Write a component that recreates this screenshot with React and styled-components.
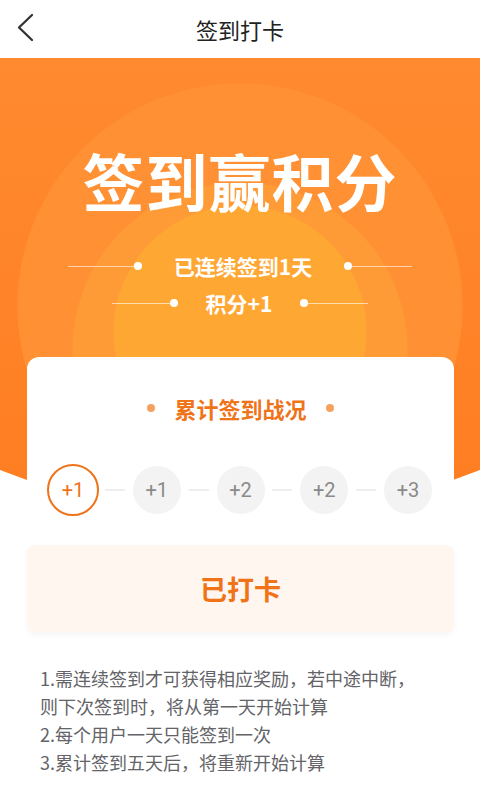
import React from "react";
import styled, { createGlobalStyle } from "styled-components";

const Global = createGlobalStyle`
  html, body { margin: 0; padding: 0; background: #fff; }
  body { font-family: "Noto Sans CJK SC", "Noto Sans", sans-serif; }
  * { box-sizing: border-box; }
`;

const Page = styled.div`
  width: 480px;
  min-height: 800px;
  background: #fff;
  overflow: hidden;
`;

const Header = styled.header`
  height: 58px;
  display: grid;
  grid-template-columns: 60px 1fr 60px;
  align-items: center;
  background: #fff;
`;

const BackBtn = styled.button`
  width: 50px;
  height: 58px;
  border: 0;
  background: transparent;
  padding: 0;
  display: flex;
  align-items: center;
  justify-content: flex-start;
`;

const Title = styled.h1`
  margin: 0;
  text-align: center;
  font-size: 22px;
  font-weight: 400;
  color: #222;
  line-height: 58px;
`;

const Banner = styled.section`
  height: 501px;
  padding-top: 91px;
  background:
    radial-gradient(circle at 240px 274px, #ffa733 0 126px, transparent 127px),
    radial-gradient(circle at 240px 292px, #ff9b36 0 167px, transparent 168px),
    radial-gradient(circle at 240px 248px, #ff9034 0 222px, transparent 223px),
    linear-gradient(180deg, #ff8a30 0%, #ff7c20 100%);
  clip-path: polygon(0 0, 100% 0, 100% 412px, 50% 100%, 0 412px);
  color: #fff;
  text-align: center;
`;

const BigTitle = styled.h2`
  margin: 0;
  font-size: 62px;
  line-height: 62px;
  font-weight: 700;
  letter-spacing: 1px;
`;

const InfoRow = styled.div`
  display: flex;
  align-items: center;
  justify-content: center;
  gap: ${(p) => p.$gap}px;
  margin-top: ${(p) => p.$top}px;
  height: 30px;
`;

const InfoText = styled.span`
  font-size: 21px;
  font-weight: 700;
  line-height: 30px;
`;

const Deco = styled.span`
  display: flex;
  align-items: center;
  flex-direction: ${(p) => (p.$right ? "row-reverse" : "row")};
`;

const DecoLine = styled.i`
  display: block;
  width: ${(p) => p.$len}px;
  height: 1px;
  background: rgba(255, 255, 255, 0.6);
`;

const DecoDot = styled.i`
  display: block;
  width: 8px;
  height: 8px;
  border-radius: 50%;
  background: #fff;
`;

const Card = styled.section`
  position: relative;
  z-index: 1;
  margin: -202px 26px 0 27px;
  background: #fff;
  border-radius: 12px 12px 10px 10px;
  padding-top: 36px;
`;

const CardTitle = styled.h3`
  margin: 0;
  display: flex;
  align-items: center;
  justify-content: center;
  gap: 19px;
  font-size: 22px;
  line-height: 30px;
  font-weight: 700;
  color: #ef7419;
`;

const TitleDot = styled.i`
  width: 8px;
  height: 8px;
  border-radius: 50%;
  background: #f5a05c;
`;

const Steps = styled.ol`
  list-style: none;
  margin: 41px 0 0;
  padding: 0 20px;
  display: flex;
  align-items: center;
  justify-content: space-between;
`;

const Step = styled.li`
  width: 52px;
  height: 52px;
  display: flex;
  align-items: center;
  justify-content: center;
`;

const Bubble = styled.span`
  width: ${(p) => (p.$active ? 52 : 48)}px;
  height: ${(p) => (p.$active ? 52 : 48)}px;
  border-radius: 50%;
  display: flex;
  align-items: center;
  justify-content: center;
  font-family: "Roboto", "Noto Sans", sans-serif;
  font-size: 20px;
  color: ${(p) => (p.$active ? "#ee7319" : "#8a8a8a")};
  background: ${(p) => (p.$active ? "#fff" : "#f3f3f3")};
  border: ${(p) => (p.$active ? "2.5px solid #ee7319" : "0")};
`;

const Dash = styled.li`
  width: 20px;
  height: 2px;
  background: #eeeeee;
`;

const DoneButton = styled.button`
  margin-top: 29px;
  width: 100%;
  height: 87px;
  border: 0;
  border-radius: 8px;
  background: #fff7ef;
  box-shadow: 0 3px 6px rgba(0, 0, 0, 0.04);
  font-family: "Noto Sans CJK SC", sans-serif;
  font-size: 27px;
  font-weight: 700;
  color: #f07318;
`;

const Rules = styled.ol`
  list-style: none;
  margin: 32px 0 0;
  padding: 0 56px 0 40px;
  font-size: 18px;
  line-height: 28px;
  color: #636368;
`;

const Rule = styled.li``;

const steps = [
  { label: "+1", active: true },
  { label: "+1" },
  { label: "+2" },
  { label: "+2" },
  { label: "+3" },
];

function Decor({ right, len }) {
  return (
    <Deco $right={right}>
      <DecoLine $len={len} />
      <DecoDot />
    </Deco>
  );
}

export default function App() {
  return (
    <Page>
      <Global />
      <Header>
        <BackBtn aria-label="返回">
          <svg width="40" height="58" viewBox="0 0 40 58">
            <polyline
              points="32,15 19,27.5 32,40"
              fill="none"
              stroke="#333"
              strokeWidth="2.3"
              strokeLinecap="round"
              strokeLinejoin="round"
            />
          </svg>
        </BackBtn>
        <Title>签到打卡</Title>
        <span />
      </Header>

      <Banner>
        <BigTitle>签到赢积分</BigTitle>
        <InfoRow $gap={32} $top={40}>
          <Decor len={66} />
          <InfoText>已连续签到1天</InfoText>
          <Decor right len={60} />
        </InfoRow>
        <InfoRow $gap={28} $top={7}>
          <Decor len={58} />
          <InfoText>积分+1</InfoText>
          <Decor right len={60} />
        </InfoRow>
      </Banner>

      <Card>
        <CardTitle>
          <TitleDot />
          累计签到战况
          <TitleDot />
        </CardTitle>
        <Steps>
          {steps.map((s, i) => (
            <React.Fragment key={i}>
              {i > 0 && <Dash />}
              <Step>
                <Bubble $active={s.active}>{s.label}</Bubble>
              </Step>
            </React.Fragment>
          ))}
        </Steps>
        <DoneButton>已打卡</DoneButton>
      </Card>

      <Rules>
        <Rule>1.需连续签到才可获得相应奖励，若中途中断，则下次签到时，将从第一天开始计算</Rule>
        <Rule>2.每个用户一天只能签到一次</Rule>
        <Rule>3.累计签到五天后，将重新开始计算</Rule>
      </Rules>
    </Page>
  );
}
